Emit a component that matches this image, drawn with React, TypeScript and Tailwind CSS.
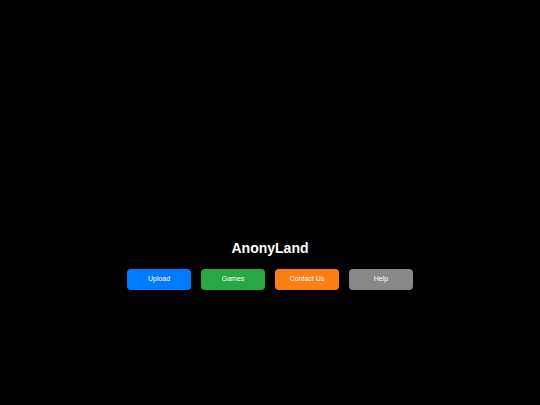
import React from "react";

export default function App() {
  const buttons = [
    { label: "Upload", cls: "bg-[#007bff]" },
    { label: "Games", cls: "bg-[#28a745]" },
    { label: "Contact Us", cls: "bg-[#fd7e14]" },
    { label: "Help", cls: "bg-[#888888]" },
  ];
  return (
    <div
      className="w-[540px] h-[405px] bg-black flex flex-col items-center pt-[240px]"
      style={{ fontFamily: '"Liberation Sans", Arial, sans-serif' }}
    >
      <h1 className="text-white font-bold text-[14px] leading-[16px]">AnonyLand</h1>
      <div className="flex gap-[10.67px] mt-[13px]">
        {buttons.map((b) => (
          <div
            key={b.label}
            className={`${b.cls} w-[63.3px] h-[21px] rounded-[4px] flex items-center justify-center text-white text-[7px]`}
          >
            {b.label}
          </div>
        ))}
      </div>
    </div>
  );
}
